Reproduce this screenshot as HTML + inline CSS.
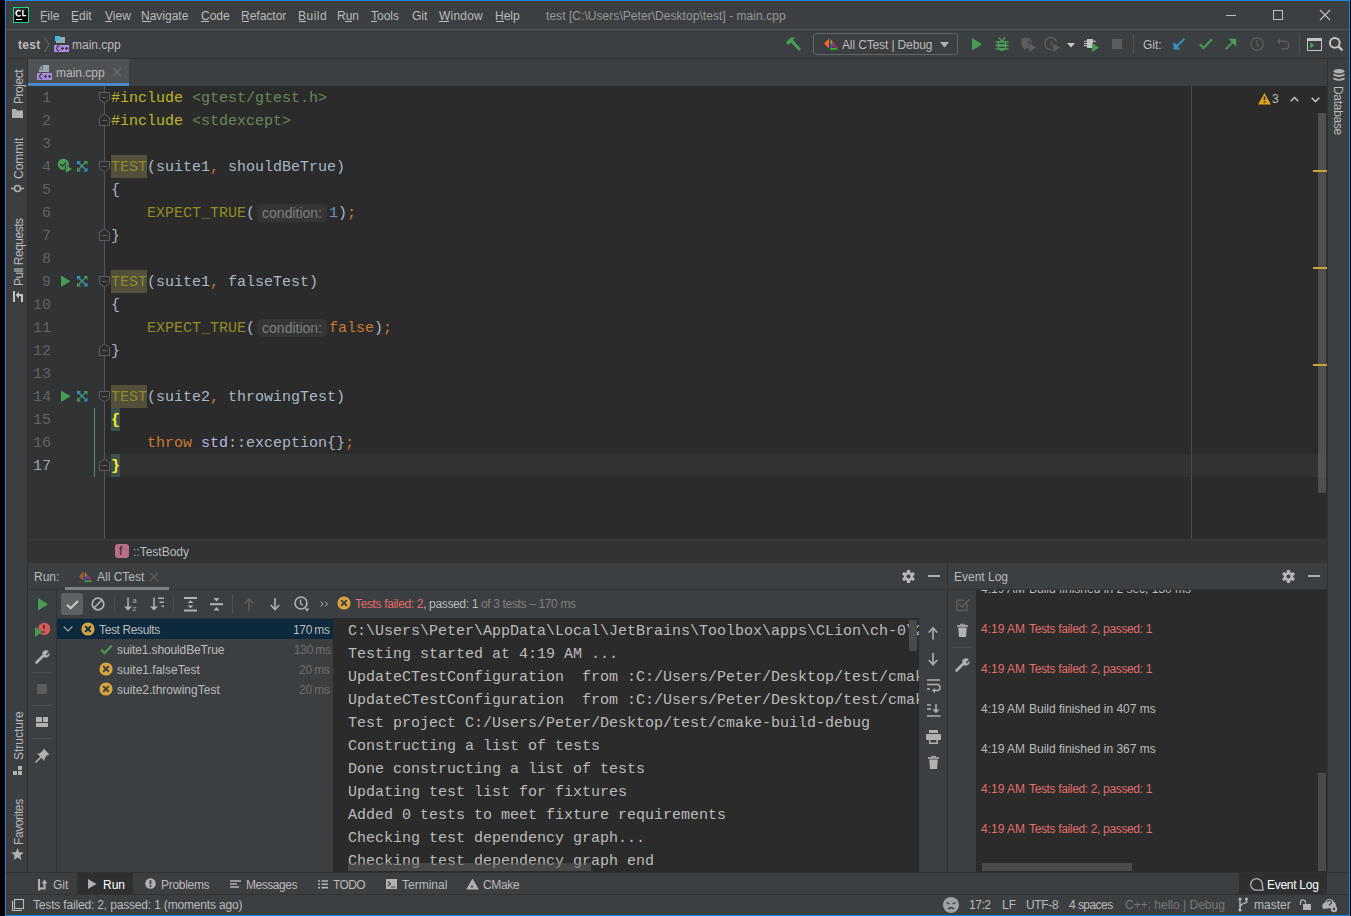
<!DOCTYPE html>
<html><head><meta charset="utf-8">
<style>
*{margin:0;padding:0;box-sizing:border-box}
html,body{width:1351px;height:916px;overflow:hidden;background:#000}
body{position:relative;font-family:"Liberation Sans",sans-serif;font-size:12px;color:#BBBBBB}
.a{position:absolute}
.t{position:absolute;white-space:pre;line-height:14px}
.m{font-family:"Liberation Mono",monospace;font-size:15px}
svg{position:absolute;overflow:visible}
.con{position:absolute;left:348px;white-space:pre;font-family:"Liberation Mono",monospace;font-size:15px;line-height:23px;color:#BBBBBB;padding-top:1px}
.ev{position:absolute;left:981px;white-space:pre;line-height:14px;color:#BBBBBB}
.ev span{position:absolute;left:48px}
.code{position:absolute;left:111px;padding-top:1px;white-space:pre;font-family:"Liberation Mono",monospace;font-size:15px;line-height:23px;height:23px}
.ln{position:absolute;left:28px;width:23px;padding-top:1px;text-align:right;white-space:pre;font-family:"Liberation Mono",monospace;font-size:15px;line-height:23px;color:#606366}
.hint{display:inline-block;font-family:"Liberation Sans",sans-serif;font-size:14px;color:#808080;background:#353535;border-radius:4px;line-height:18px;height:18px;width:70px;padding:0 0 0 5px;margin:2px 2px 0 2px;vertical-align:top}

</style></head><body>
<!-- window frame -->
<div class="a" style="left:5px;top:0;width:1345px;height:916px;background:#1a86e6"></div>
<div class="a" style="left:6px;top:1px;width:1343px;height:914px;background:#3f3b38"></div>
<div class="a" style="left:7px;top:2px;width:1341px;height:913px;background:#3C3F41"></div>

<!-- title separator -->
<div class="a" style="left:6px;top:29px;width:1343px;height:1px;background:#555555"></div>
<!-- nav bar bottom line -->
<div class="a" style="left:6px;top:58px;width:1343px;height:1px;background:#323232"></div>

<!-- left strip divider -->
<div class="a" style="left:27px;top:59px;width:1px;height:813px;background:#323232"></div>
<!-- right strip divider -->
<div class="a" style="left:1327px;top:59px;width:1px;height:813px;background:#323232"></div>

<!-- editor tab bar -->
<div class="a" style="left:28px;top:59px;width:101px;height:24px;background:#4E5254"></div>
<div class="a" style="left:28px;top:83px;width:101px;height:3px;background:#4A88C7"></div>

<!-- editor -->
<div class="a" style="left:28px;top:86px;width:1299px;height:453px;background:#2B2B2B"></div>
<div class="a" style="left:28px;top:86px;width:76px;height:453px;background:#313335"></div>
<div class="a" style="left:104px;top:86px;width:1px;height:453px;background:#555555"></div>
<div class="a" style="left:105px;top:454px;width:1222px;height:23px;background:#323232"></div>
<div class="a" style="left:1191px;top:86px;width:1px;height:453px;background:#4a4a4a"></div>

<!-- breadcrumb bar -->
<div class="a" style="left:28px;top:539px;width:1299px;height:1px;background:#393939"></div><div class="a" style="left:28px;top:540px;width:1299px;height:22px;background:#313335"></div>
<div class="a" style="left:28px;top:562px;width:1299px;height:1px;background:#323232"></div>

<!-- bottom panel -->
<div class="a" style="left:28px;top:589px;width:1299px;height:1px;background:#323232"></div>
<div class="a" style="left:947px;top:563px;width:1px;height:309px;background:#323232"></div>
<div class="a" style="left:56px;top:590px;width:1px;height:282px;background:#323232"></div>
<div class="a" style="left:333px;top:618px;width:586px;height:254px;background:#2B2B2B"></div>
<div class="a" style="left:57px;top:618px;width:276px;height:1px;background:#323232"></div><div class="a" style="left:57px;top:619px;width:276px;height:20px;background:#0D293E"></div>
<div class="a" style="left:976px;top:590px;width:351px;height:282px;background:#2B2B2B"></div>

<!-- bottom tool bar -->
<div class="a" style="left:6px;top:872px;width:1343px;height:1px;background:#323232"></div>
<div class="a" style="left:77px;top:873px;width:56px;height:21px;background:#2D2F31"></div><div class="a" style="left:1239px;top:873px;width:88px;height:21px;background:#2D2F31"></div>
<div class="a" style="left:6px;top:894px;width:1343px;height:1px;background:#323232"></div>


<!-- ===== TITLE BAR ===== -->
<div class="a" style="left:13px;top:7px;width:16px;height:16px;background:#21D789"></div>
<div class="a" style="left:14px;top:8px;width:14px;height:14px;background:linear-gradient(160deg,#444 0%,#000 55%)"></div>
<svg style="left:13px;top:7px" width="16" height="16"><path d="M7.6 4.2A2.6 2.8 0 1 0 7.6 8.2" stroke="#FFFFFF" stroke-width="1.4" fill="none"/><path d="M9.9 3V8.6H13.2" stroke="#FFFFFF" stroke-width="1.4" fill="none"/></svg>
<div class="a" style="left:16px;top:19px;width:6px;height:1px;background:#fff"></div>

<div class="t" style="left:40px;top:9px">File</div>
<div class="t" style="left:71px;top:9px">Edit</div>
<div class="t" style="left:105px;top:9px">View</div>
<div class="t" style="left:141px;top:9px">Navigate</div>
<div class="t" style="left:201px;top:9px">Code</div>
<div class="t" style="left:241px;top:9px">Refactor</div>
<div class="t" style="left:298px;top:9px;letter-spacing:0.5px">Build</div>
<div class="t" style="left:337px;top:9px">Run</div>
<div class="t" style="left:371px;top:9px">Tools</div>
<div class="t" style="left:412px;top:9px">Git</div>
<div class="t" style="left:439px;top:9px;letter-spacing:0.2px">Window</div>
<div class="t" style="left:495px;top:9px">Help</div>
<div class="t" style="left:546px;top:9px;color:#989898;letter-spacing:0.05px">test [C:\Users\Peter\Desktop\test] - main.cpp</div>
<!-- mnemonic underlines -->
<div class="a" style="left:41px;top:21px;width:6px;height:1px;background:#BBB"></div>
<div class="a" style="left:72px;top:21px;width:6px;height:1px;background:#BBB"></div>
<div class="a" style="left:105px;top:21px;width:7px;height:1px;background:#BBB"></div>
<div class="a" style="left:142px;top:21px;width:9px;height:1px;background:#BBB"></div>
<div class="a" style="left:201px;top:21px;width:8px;height:1px;background:#BBB"></div>
<div class="a" style="left:242px;top:21px;width:7px;height:1px;background:#BBB"></div>
<div class="a" style="left:299px;top:21px;width:7px;height:1px;background:#BBB"></div>
<div class="a" style="left:345px;top:21px;width:7px;height:1px;background:#BBB"></div>
<div class="a" style="left:371px;top:21px;width:6px;height:1px;background:#BBB"></div>
<div class="a" style="left:439px;top:21px;width:10px;height:1px;background:#BBB"></div>
<div class="a" style="left:496px;top:21px;width:8px;height:1px;background:#BBB"></div>

<!-- window controls -->
<div class="a" style="left:1226px;top:15px;width:10px;height:1px;background:#C0C0C0"></div>
<div class="a" style="left:1273px;top:10px;width:10px;height:10px;border:1px solid #C0C0C0"></div>
<svg style="left:1320px;top:10px" width="10" height="10"><path d="M0 0L10 10M10 0L0 10" stroke="#C0C0C0" stroke-width="1.1"/></svg>

<!-- ===== NAV BAR ===== -->
<div class="t" style="left:18px;top:38px;font-weight:bold;letter-spacing:0.3px">test</div>
<svg style="left:44px;top:37px" width="6" height="16"><path d="M0.5 0.5L5 7.5L0.5 15" stroke="#6E6E6E" fill="none" stroke-width="1"/></svg>
<div class="a" style="left:55px;top:36px;width:5px;height:5px;background:#40B6E0"></div>
<div class="a" style="left:60px;top:37px;width:5px;height:6px;background:#9AA7B0"></div>
<div class="a" style="left:56px;top:41px;width:9px;height:2px;background:#9AA7B0"></div>
<div class="a" style="left:54px;top:45px;width:15px;height:7px;background:#A98CDA"></div>
<svg style="left:54px;top:45px" width="15" height="7"><path d="M5.5 1.6A1.9 2.1 0 1 0 5.5 5.2" stroke="#3F3552" stroke-width="1.2" fill="none"/><path d="M6.9 3.4H10M8.45 1.9V4.9M11 3.4H14.1M12.55 1.9V4.9" stroke="#3F3552" stroke-width="1.2"/></svg>
<div class="t" style="left:72px;top:38px">main.cpp</div>


<!-- nav toolbar right -->
<svg style="left:785px;top:36px" width="17" height="16"><path d="M1 6L6 1.5L10 1.5L8 4L16 13L14 15L6 6.5L3 9Z" fill="#499C54"/></svg>
<div class="a" style="left:813px;top:33px;width:145px;height:22px;border:1px solid #636566;border-radius:3px"></div>
<svg style="left:824px;top:38px" width="15" height="13"><path d="M5 0.5L5 10.5L0 5.5Z" fill="#F26522"/><path d="M6.5 0.8L9.2 4.6L6.5 6.8Z" fill="#6CC644"/><path d="M6.5 6.8L9.2 4.6L10.6 6.6L7.8 10L6.5 10Z" fill="#3B4FD0"/><path d="M6.8 0.8L14.5 11.3L11.6 10.2L8.6 5.5Z" fill="#D7263D"/><path d="M6.5 10L11.6 10L14.5 11.5L6.5 12Z" fill="#27C227"/></svg>
<div class="t" style="left:842px;top:38px;letter-spacing:-0.13px">All CTest | Debug</div>
<svg style="left:940px;top:42px" width="9" height="6"><path d="M0 0L9 0L4.5 5.5Z" fill="#AFB1B3"/></svg>
<svg style="left:972px;top:38px" width="10" height="13"><path d="M0 0L10 6.2L0 12.4Z" fill="#499C54"/></svg>
<svg style="left:995px;top:37px" width="14" height="15"><path d="M4 0.5L6 3M10 0.5L8 3" stroke="#499C54" stroke-width="1.6"/><ellipse cx="7" cy="8.5" rx="4.6" ry="5.6" fill="#499C54"/><path d="M0.5 5H13.5M0.5 8.5H13.5M0.5 12H13.5" stroke="#499C54" stroke-width="1.4"/><path d="M4.2 6.4H9.8M4.2 10.4H9.8" stroke="#3C3F41" stroke-width="1.4"/></svg>
<svg style="left:1021px;top:37px" width="15" height="15"><path d="M0.5 1.5Q5 0 9.5 1.5L9.5 4L7.5 4L7.5 11Q5 12.5 3 12 Q0.5 10 0.5 6Z" fill="#5D5D5D"/><path d="M8.3 3.5L10 3.5L10 6" stroke="#5D5D5D" stroke-width="1.2" fill="none"/><path d="M8 6L15 10.5L8 15Z" fill="#5D5D5D"/></svg>
<svg style="left:1045px;top:37px" width="16" height="16"><path d="M11.5 4.5A6 6 0 1 0 6.5 12.5" stroke="#5D5D5D" stroke-width="1.6" fill="none"/><path d="M6.5 3.5L6.5 7L5.5 9" stroke="#5D5D5D" stroke-width="1.2" fill="none"/><path d="M8 6.5L15 10.5L8 15Z" fill="#5D5D5D"/></svg>
<svg style="left:1067px;top:43px" width="8" height="5"><path d="M0 0L8 0L4 4.5Z" fill="#C8C8C8"/></svg>
<svg style="left:1083px;top:38px" width="17" height="15"><rect x="4" y="1" width="6" height="9" fill="#C4C4C4"/><path d="M1 3.3H4M1 5.5H4M1 7.6H4M10 3.3H13" stroke="#C4C4C4" stroke-width="1.1"/><path d="M9 5L16 9.5L9 14Z" fill="#499C54"/></svg>
<div class="a" style="left:1112px;top:39px;width:10px;height:10px;background:#5C5C5C"></div>
<div class="a" style="left:1133px;top:34px;width:1px;height:20px;background:#515151"></div>
<div class="t" style="left:1143px;top:38px">Git:</div>
<svg style="left:1173px;top:38px" width="13" height="12"><path d="M11.5 0.8L2.5 9.3" stroke="#3592C4" stroke-width="1.9"/><path d="M0.5 3.8L0.5 11.5L7.5 11.5Z" fill="#3592C4"/></svg>
<svg style="left:1199px;top:38px" width="14" height="12"><path d="M0.8 6.3L4.5 10L13 1.3" stroke="#499C54" stroke-width="2" fill="none"/></svg>
<svg style="left:1225px;top:38px" width="12" height="12"><path d="M0.8 11.2L9.5 2.5" stroke="#499C54" stroke-width="1.9"/><path d="M3.5 0.8L11.2 0.8L11.2 8.5Z" fill="#499C54"/></svg>
<svg style="left:1250px;top:37px" width="14" height="14"><circle cx="7" cy="7" r="6.2" stroke="#5A5A5A" stroke-width="1.4" fill="none"/><path d="M6.5 3.2V7.3L8.8 9.5" stroke="#5A5A5A" stroke-width="1.2" fill="none"/></svg>
<svg style="left:1277px;top:37px" width="13" height="14"><path d="M2 4.2H8Q12 4.2 12 8Q12 12 8 12H4" stroke="#5A5A5A" stroke-width="1.5" fill="none"/><path d="M3 0.5L3 8L0 4.2Z" fill="#5A5A5A"/></svg>
<div class="a" style="left:1299px;top:34px;width:1px;height:20px;background:#515151"></div>
<svg style="left:1307px;top:38px" width="15" height="13"><rect x="0.5" y="0.5" width="14" height="12" stroke="#C4C4C4" fill="none"/><rect x="0" y="0" width="15" height="3" fill="#C4C4C4"/><path d="M3.2 4.2L7.3 7.3L3.2 10.4Z" fill="#499C54"/></svg>
<svg style="left:1328px;top:36px" width="17" height="17"><circle cx="6.8" cy="6.8" r="4.9" stroke="#C5C5C5" stroke-width="2" fill="none"/><path d="M10.3 10.3L14.5 14.5" stroke="#C5C5C5" stroke-width="2.4"/></svg>


<!-- ===== LEFT STRIP ===== -->
<div class="t" style="left:12px;top:104px;transform:rotate(-90deg);transform-origin:0 0;letter-spacing:-0.45px">Project</div>
<svg style="left:12px;top:109px" width="11" height="9"><path d="M0 0H4L5 1.5H11V9H0Z" fill="#AFB1B3"/></svg>
<div class="t" style="left:12px;top:179px;transform:rotate(-90deg);transform-origin:0 0">Commit</div>
<svg style="left:11px;top:184px" width="13" height="9"><circle cx="6.5" cy="4.5" r="3" stroke="#AFB1B3" stroke-width="1.6" fill="none"/><path d="M0 4.5H3.5M9.5 4.5H13" stroke="#AFB1B3" stroke-width="1.4"/></svg>
<div class="t" style="left:12px;top:286px;transform:rotate(-90deg);transform-origin:0 0;letter-spacing:-0.5px">Pull Requests</div>
<svg style="left:13px;top:291px" width="10" height="11"><path d="M1 0V11" stroke="#C4C4C4" stroke-width="2"/><path d="M5 4H9V11" stroke="#C4C4C4" stroke-width="2" fill="none"/><path d="M2.6 4L6 0.6V7.4Z" fill="#C4C4C4"/></svg>
<div class="t" style="left:12px;top:760px;transform:rotate(-90deg);transform-origin:0 0">Structure</div>
<svg style="left:13px;top:766px" width="10" height="10"><rect x="5" y="0" width="4" height="4" fill="#AFB1B3"/><rect x="0" y="5" width="4" height="4" fill="#AFB1B3"/><rect x="5" y="5" width="4" height="4" fill="#AFB1B3"/></svg>
<div class="t" style="left:12px;top:845px;transform:rotate(-90deg);transform-origin:0 0;letter-spacing:-0.4px">Favorites</div>
<svg style="left:11px;top:848px" width="13" height="12"><path d="M6.5 0L8.2 4.3L12.8 4.6L9.3 7.5L10.4 12L6.5 9.6L2.6 12L3.7 7.5L0.2 4.6L4.8 4.3Z" fill="#AFB1B3"/></svg>

<!-- ===== RIGHT STRIP ===== -->
<svg style="left:1333px;top:69px" width="12" height="13"><ellipse cx="6" cy="2.2" rx="5.6" ry="2.2" fill="#AFB1B3"/><path d="M0.4 4.6Q6 7.4 11.6 4.6V6.6Q6 9.4 0.4 6.6Z M0.4 8.6Q6 11.4 11.6 8.6V10.4Q6 13.2 0.4 10.4Z" fill="#AFB1B3"/></svg>
<div class="t" style="left:1345px;top:86px;transform:rotate(90deg);transform-origin:0 0;letter-spacing:-0.3px">Database</div>

<!-- ===== EDITOR TAB ===== -->
<svg style="left:37px;top:64px" width="16" height="17"><path d="M2 5L5 1.3V5Z" fill="#9AA7B0"/><path d="M5.8 1H12V8H2V5.8H5.8Z" fill="#9AA7B0"/><rect x="0" y="9" width="15" height="7" fill="#A98CDA"/></svg>
<svg style="left:37px;top:73px" width="15" height="7"><path d="M5.5 1.6A1.9 2.1 0 1 0 5.5 5.2" stroke="#3F3552" stroke-width="1.2" fill="none"/><path d="M6.9 3.4H10M8.45 1.9V4.9M11 3.4H14.1M12.55 1.9V4.9" stroke="#3F3552" stroke-width="1.2"/></svg>
<div class="t" style="left:56px;top:66px">main.cpp</div>
<svg style="left:113px;top:68px" width="8" height="8"><path d="M0 0L8 8M8 0L0 8" stroke="#6E6E6E" stroke-width="1.1"/></svg>


<!-- ===== EDITOR CODE ===== -->
<div class="a" style="left:111px;top:155px;width:36px;height:23px;background:#52503A"></div>
<div class="a" style="left:111px;top:270px;width:36px;height:23px;background:#52503A"></div>
<div class="a" style="left:111px;top:385px;width:36px;height:23px;background:#52503A"></div>
<div class="a" style="left:111px;top:408px;width:9px;height:23px;background:#3B514D"></div>
<div class="a" style="left:111px;top:454px;width:9px;height:23px;background:#3B514D"></div>
<div class="a" style="left:94px;top:408px;width:1px;height:69px;background:#5A8A84"></div>
<div class="ln" style="top:86px;color:#606366">1</div>
<div class="ln" style="top:109px;color:#606366">2</div>
<div class="ln" style="top:132px;color:#606366">3</div>
<div class="ln" style="top:155px;color:#606366">4</div>
<div class="ln" style="top:178px;color:#606366">5</div>
<div class="ln" style="top:201px;color:#606366">6</div>
<div class="ln" style="top:224px;color:#606366">7</div>
<div class="ln" style="top:247px;color:#606366">8</div>
<div class="ln" style="top:270px;color:#606366">9</div>
<div class="ln" style="top:293px;color:#606366">10</div>
<div class="ln" style="top:316px;color:#606366">11</div>
<div class="ln" style="top:339px;color:#606366">12</div>
<div class="ln" style="top:362px;color:#606366">13</div>
<div class="ln" style="top:385px;color:#606366">14</div>
<div class="ln" style="top:408px;color:#606366">15</div>
<div class="ln" style="top:431px;color:#606366">16</div>
<div class="ln" style="top:454px;color:#A4A3A3">17</div>
<div class="code" style="top:86px"><span style="color:#BBB529;">#include</span> <span style="color:#6A8759;">&lt;gtest/gtest.h&gt;</span></div>
<div class="code" style="top:109px"><span style="color:#BBB529;">#include</span> <span style="color:#6A8759;">&lt;stdexcept&gt;</span></div>
<div class="code" style="top:155px"><span style="color:#908B25;">TEST</span><span style="color:#A9B7C6;">(suite1</span><span style="color:#CC7832;">,</span><span style="color:#A9B7C6;"> shouldBeTrue)</span></div>
<div class="code" style="top:178px"><span style="color:#A9B7C6;">{</span></div>
<div class="code" style="top:201px">    <span style="color:#908B25;">EXPECT_TRUE</span><span style="color:#A9B7C6;">(</span><span class="hint">condition:</span><span style="color:#6897BB;">1</span><span style="color:#A9B7C6;">)</span><span style="color:#CC7832;">;</span></div>
<div class="code" style="top:224px"><span style="color:#A9B7C6;">}</span></div>
<div class="code" style="top:270px"><span style="color:#908B25;">TEST</span><span style="color:#A9B7C6;">(suite1</span><span style="color:#CC7832;">,</span><span style="color:#A9B7C6;"> falseTest)</span></div>
<div class="code" style="top:293px"><span style="color:#A9B7C6;">{</span></div>
<div class="code" style="top:316px">    <span style="color:#908B25;">EXPECT_TRUE</span><span style="color:#A9B7C6;">(</span><span class="hint">condition:</span><span style="color:#CC7832;">false</span><span style="color:#A9B7C6;">)</span><span style="color:#CC7832;">;</span></div>
<div class="code" style="top:339px"><span style="color:#A9B7C6;">}</span></div>
<div class="code" style="top:385px"><span style="color:#908B25;">TEST</span><span style="color:#A9B7C6;">(suite2</span><span style="color:#CC7832;">,</span><span style="color:#A9B7C6;"> throwingTest)</span></div>
<div class="code" style="top:408px"><span style="color:#FFEF28;font-weight:bold">{</span></div>
<div class="code" style="top:431px">    <span style="color:#CC7832;">throw</span> <span style="color:#B5B6E3;">std</span><span style="color:#A9B7C6;">::exception{}</span><span style="color:#CC7832;">;</span></div>
<div class="code" style="top:454px"><span style="color:#FFEF28;font-weight:bold">}</span></div>


<!-- fold markers & gutter icons -->
<svg style="left:0;top:0" width="1" height="1"><path d="M99.5 92.5H109.5V99.5L104.5 103L99.5 99.5Z" fill="#2D2D2D" stroke="#5E5E5E"/><path d="M102 97.5H107" stroke="#5E5E5E"/><path d="M99.5 161.5H109.5V168.5L104.5 172L99.5 168.5Z" fill="#2D2D2D" stroke="#5E5E5E"/><path d="M102 166.5H107" stroke="#5E5E5E"/><path d="M99.5 276.5H109.5V283.5L104.5 287L99.5 283.5Z" fill="#2D2D2D" stroke="#5E5E5E"/><path d="M102 281.5H107" stroke="#5E5E5E"/><path d="M99.5 391.5H109.5V398.5L104.5 402L99.5 398.5Z" fill="#2D2D2D" stroke="#5E5E5E"/><path d="M102 396.5H107" stroke="#5E5E5E"/><path d="M104.5 114L109.5 117.5V125.5H99.5V117.5Z" fill="#2D2D2D" stroke="#5E5E5E"/><path d="M102 120.5H107" stroke="#5E5E5E"/><path d="M104.5 229L109.5 232.5V240.5H99.5V232.5Z" fill="#2D2D2D" stroke="#5E5E5E"/><path d="M102 235.5H107" stroke="#5E5E5E"/><path d="M104.5 344L109.5 347.5V355.5H99.5V347.5Z" fill="#2D2D2D" stroke="#5E5E5E"/><path d="M102 350.5H107" stroke="#5E5E5E"/><path d="M104.5 459L109.5 462.5V470.5H99.5V462.5Z" fill="#2D2D2D" stroke="#5E5E5E"/><path d="M102 465.5H107" stroke="#5E5E5E"/><circle cx="63.3" cy="164.3" r="5.6" fill="#499C54"/><path d="M60.2 164L62.4 166.3L65.8 162.3" stroke="#313335" stroke-width="1.3" fill="none"/><path d="M64.8 164.5L73.5 168.5L64.8 173.5Z" fill="#313335"/><path d="M65.8 165.1L72 169L65.8 173Z" fill="#499C54"/><path d="M61 275.5L70.5 281.2L61 287Z" fill="#499C54"/><path d="M61 390.5L70.5 396.2L61 402Z" fill="#499C54"/><path d="M78.5 162.5L85.5 169.5" stroke="#3592C4" stroke-width="1.5"/><path d="M77 161H81L77 165Z M87.5 171.5H83.5L87.5 167.5Z" fill="#3592C4"/><path d="M78.5 169.5L85.5 162.5" stroke="#499C54" stroke-width="1.3"/><path d="M87.5 161H83.5L87.5 165Z M77 171.5H81L77 167.5Z" fill="#499C54"/><path d="M78.5 277.5L85.5 284.5" stroke="#3592C4" stroke-width="1.5"/><path d="M77 276H81L77 280Z M87.5 286.5H83.5L87.5 282.5Z" fill="#3592C4"/><path d="M78.5 284.5L85.5 277.5" stroke="#499C54" stroke-width="1.3"/><path d="M87.5 276H83.5L87.5 280Z M77 286.5H81L77 282.5Z" fill="#499C54"/><path d="M78.5 392.5L85.5 399.5" stroke="#3592C4" stroke-width="1.5"/><path d="M77 391H81L77 395Z M87.5 401.5H83.5L87.5 397.5Z" fill="#3592C4"/><path d="M78.5 399.5L85.5 392.5" stroke="#499C54" stroke-width="1.3"/><path d="M87.5 391H83.5L87.5 395Z M77 401.5H81L77 397.5Z" fill="#499C54"/></svg>


<!-- editor right side -->
<svg style="left:1258px;top:93px" width="13" height="12"><path d="M6.5 0L13 11.5H0Z" fill="#DBA21B"/><path d="M6.5 3.5V7" stroke="#2B2B2B" stroke-width="1.6"/><rect x="5.7" y="8.3" width="1.6" height="1.6" fill="#2B2B2B"/></svg>
<div class="t" style="left:1272px;top:92px;font-size:12px">3</div>
<svg style="left:1290px;top:96px" width="9" height="6"><path d="M0.7 5.3L4.5 1.5L8.3 5.3" stroke="#C9C9C9" stroke-width="1.4" fill="none"/></svg>
<svg style="left:1311px;top:97px" width="9" height="6"><path d="M0.7 0.7L4.5 4.5L8.3 0.7" stroke="#C9C9C9" stroke-width="1.4" fill="none"/></svg>
<div class="a" style="left:1318px;top:113px;width:8px;height:380px;background:rgba(110,110,110,0.55)"></div>
<div class="a" style="left:1313px;top:170px;width:14px;height:2px;background:#C8A23A"></div>
<div class="a" style="left:1313px;top:267px;width:14px;height:2px;background:#C8A23A"></div>
<div class="a" style="left:1313px;top:364px;width:14px;height:2px;background:#C8A23A"></div>

<!-- breadcrumbs -->
<div class="a" style="left:115px;top:544px;width:14px;height:14px;background:#B86E84;border-radius:3px"></div>
<div class="t" style="left:119px;top:544px;font-size:12px;color:#2B2B2B">f</div>
<div class="t" style="left:133px;top:545px">::TestBody</div>


<!-- ===== RUN PANEL HEADER ===== -->
<div class="t" style="left:34px;top:570px">Run:</div>
<svg style="left:79px;top:571px" width="14" height="12"><path d="M4.5 0.5L4.5 10L0 5.2Z" fill="#B5562C"/><path d="M5.8 0.5L8.4 4.2L5.8 6.3Z" fill="#5FAF44"/><path d="M5.8 6.3L8.4 4.2L9.7 6.1L7.1 9.5L5.8 9.5Z" fill="#3A4EC8"/><path d="M6.1 0.5L13.5 10.6L10.7 9.6L7.9 5.2Z" fill="#B8353F"/><path d="M5.8 9.5L10.7 9.6L13.5 10.8L5.8 11.3Z" fill="#2EA84A"/></svg>
<div class="t" style="left:97px;top:570px">All CTest</div>
<svg style="left:150px;top:573px" width="8" height="8"><path d="M0 0L8 8M8 0L0 8" stroke="#5E6060" stroke-width="1.1"/></svg>
<div class="a" style="left:65px;top:587px;width:104px;height:3px;background:#7E8287"></div>
<svg style="left:902px;top:570px" width="13" height="13"><g transform="translate(6.5 6.5)" fill="#B4B6B8"><circle r="4.6"/><rect x="-1.7" y="-6.6" width="3.4" height="3.5" rx="0.8" transform="rotate(0)"/><rect x="-1.7" y="-6.6" width="3.4" height="3.5" rx="0.8" transform="rotate(60)"/><rect x="-1.7" y="-6.6" width="3.4" height="3.5" rx="0.8" transform="rotate(120)"/><rect x="-1.7" y="-6.6" width="3.4" height="3.5" rx="0.8" transform="rotate(180)"/><rect x="-1.7" y="-6.6" width="3.4" height="3.5" rx="0.8" transform="rotate(240)"/><rect x="-1.7" y="-6.6" width="3.4" height="3.5" rx="0.8" transform="rotate(300)"/><circle r="1.9" fill="#3C3F41"/></g></svg>
<div class="a" style="left:928px;top:575px;width:12px;height:2px;background:#AFB1B3"></div>

<!-- ===== RUN LEFT TOOLBAR ===== -->
<svg style="left:38px;top:598px" width="10" height="13"><path d="M0 0L10 6.2L0 12.4Z" fill="#499C54"/></svg>
<svg style="left:30px;top:618px" width="26" height="22"><circle cx="14.2" cy="10.9" r="6.1" fill="#D95B55"/><rect x="13" y="7" width="1.8" height="3.7" fill="#2F3A3C"/><rect x="12.2" y="13.4" width="2.6" height="1.4" fill="#2F3A3C"/><path d="M5 9L12 14L5 19Z" fill="#499C54" stroke="#3C3F41" stroke-width="0.9" stroke-linejoin="round"/><path d="M5 9L12 14L5 19Z" fill="#499C54"/></svg>
<svg style="left:35px;top:649px" width="15" height="15"><path d="M1.5 13.5L8 7" stroke="#AFB1B3" stroke-width="2.6" stroke-linecap="round"/><path d="M7 4.5A4 4 0 0 1 13.8 2.5L11 5.3L12 6.5L14.5 3.8A4 4 0 0 1 9.5 8.5Z" fill="#AFB1B3"/></svg>
<div class="a" style="left:32px;top:672px;width:20px;height:1px;background:#4B4D4F"></div>
<div class="a" style="left:37px;top:684px;width:10px;height:10px;background:#5C5C5C"></div>
<div class="a" style="left:32px;top:705px;width:20px;height:1px;background:#4B4D4F"></div>
<svg style="left:36px;top:717px" width="12" height="10"><rect x="0" y="0" width="6" height="5" fill="#AFB1B3"/><rect x="7" y="0" width="5" height="5" fill="#AFB1B3"/><rect x="0" y="6" width="12" height="4" fill="#AFB1B3"/></svg>
<div class="a" style="left:32px;top:738px;width:20px;height:1px;background:#4B4D4F"></div>
<svg style="left:35px;top:748px" width="15" height="15"><path d="M0.5 14.5L6 9" stroke="#AFB1B3" stroke-width="1.6"/><path d="M8.5 0.5L14.5 6.5L12.5 7L9.5 10.5L9.5 13L2 5.5L4.5 5.5L8 2.5Z" fill="#AFB1B3"/></svg>

<!-- ===== RUN TOP TOOLBAR ===== -->
<div class="a" style="left:61px;top:593px;width:22px;height:22px;background:#5C6164;border-radius:3px"></div>
<svg style="left:66px;top:600px" width="13" height="10"><path d="M1 4.8L4.5 8.3L12 1" stroke="#C9C9C9" stroke-width="2" fill="none"/></svg>
<svg style="left:91px;top:597px" width="14" height="14"><circle cx="7" cy="7" r="5.8" stroke="#AFB1B3" stroke-width="1.7" fill="none"/><path d="M3 11L11 3" stroke="#AFB1B3" stroke-width="1.7"/></svg>
<div class="a" style="left:114px;top:594px;width:1px;height:20px;background:#4B4D4F"></div>
<svg style="left:124px;top:597px" width="14" height="15"><path d="M4 0.5V12.5" stroke="#AFB1B3" stroke-width="1.5"/><path d="M0 9.5L4 13.5L8 9.5Z" fill="#AFB1B3"/><text x="8.5" y="6" font-family="Liberation Sans" font-size="7.5" fill="#AFB1B3">a</text><text x="8.5" y="13.5" font-family="Liberation Sans" font-size="7.5" fill="#AFB1B3">z</text></svg>
<svg style="left:150px;top:597px" width="15" height="15"><path d="M4 0.5V12.5" stroke="#AFB1B3" stroke-width="1.5"/><path d="M0 9.5L4 13.5L8 9.5Z" fill="#AFB1B3"/><path d="M8 1.3H14M9.5 5.3H14M11.5 9.3H14" stroke="#AFB1B3" stroke-width="1.6"/></svg>
<div class="a" style="left:173px;top:594px;width:1px;height:20px;background:#4B4D4F"></div>
<svg style="left:184px;top:597px" width="13" height="15"><path d="M0 1H13M0 13.5H13" stroke="#AFB1B3" stroke-width="2"/><path d="M3.5 6L6.5 3.2L9.5 6Z M3.5 8.5L6.5 11.3L9.5 8.5Z" fill="#AFB1B3"/></svg>
<svg style="left:210px;top:597px" width="13" height="15"><path d="M0 7.2H13" stroke="#AFB1B3" stroke-width="2"/><path d="M3.5 1L6.5 4.5L9.5 1Z M3.5 13.5L6.5 10L9.5 13.5Z" fill="#AFB1B3"/></svg>
<div class="a" style="left:232px;top:594px;width:1px;height:20px;background:#4B4D4F"></div>
<svg style="left:244px;top:598px" width="10" height="13"><path d="M5 2V12.5" stroke="#5D5D5D" stroke-width="1.6"/><path d="M0.8 5.5L5 1L9.2 5.5" stroke="#5D5D5D" stroke-width="1.6" fill="none"/></svg>
<svg style="left:270px;top:598px" width="10" height="13"><path d="M5 0V10.5" stroke="#AFB1B3" stroke-width="1.6"/><path d="M0.8 7L5 11.5L9.2 7" stroke="#AFB1B3" stroke-width="1.6" fill="none"/></svg>
<svg style="left:294px;top:596px" width="16" height="17"><circle cx="7" cy="7" r="6" stroke="#AFB1B3" stroke-width="1.6" fill="none"/><path d="M6.5 3.5V7.3L8.8 9.3" stroke="#AFB1B3" stroke-width="1.3" fill="none"/><path d="M10.5 12.5H15.5L13 15.5Z" fill="#AFB1B3"/></svg>
<svg style="left:320px;top:601px" width="9" height="6"><path d="M0.5 0.5L3 3L0.5 5.5M5 0.5L7.5 3L5 5.5" stroke="#AFB1B3" stroke-width="1" fill="none"/></svg>
<svg style="left:337px;top:596px" width="14" height="14"><circle cx="7" cy="7" r="6.6" fill="#D8A441"/><path d="M4.2 4.2L9.8 9.8M9.8 4.2L4.2 9.8" stroke="#3C3F41" stroke-width="1.9"/></svg>
<div class="t" style="left:355px;top:597px;letter-spacing:-0.35px"><span style="color:#E06C6C">Tests failed: 2</span>, passed: 1<span style="color:#808080"> of 3 tests – 170 ms</span></div>

<!-- ===== TEST TREE ===== -->
<svg style="left:63px;top:626px" width="10" height="6"><path d="M0.7 0.7L5 5L9.3 0.7" stroke="#AFB1B3" stroke-width="1.2" fill="none"/></svg>
<svg style="left:81px;top:622px" width="14" height="14"><circle cx="7" cy="7" r="6.6" fill="#D8A441"/><path d="M4.2 4.2L9.8 9.8M9.8 4.2L4.2 9.8" stroke="#0D293E" stroke-width="1.9"/></svg>
<div class="t" style="left:99px;top:623px;letter-spacing:-0.37px">Test Results</div>
<div class="t" style="left:293px;top:623px;letter-spacing:-0.3px;word-spacing:-0.8px">170 ms</div>
<svg style="left:100px;top:644px" width="13" height="11"><path d="M1 5.5L4.5 9L12 1.5" stroke="#499C54" stroke-width="2.2" fill="none"/></svg>
<div class="t" style="left:117px;top:643px;letter-spacing:-0.12px">suite1.shouldBeTrue</div>
<div class="t" style="left:294px;top:643px;color:#6E6E6E;letter-spacing:-0.3px;word-spacing:-0.8px">130 ms</div>
<svg style="left:99px;top:662px" width="14" height="14"><circle cx="7" cy="7" r="6.6" fill="#D8A441"/><path d="M4.2 4.2L9.8 9.8M9.8 4.2L4.2 9.8" stroke="#3C3F41" stroke-width="1.9"/></svg>
<div class="t" style="left:117px;top:663px">suite1.falseTest</div>
<div class="t" style="left:299px;top:663px;color:#6E6E6E;letter-spacing:-0.2px;word-spacing:-0.8px">20 ms</div>
<svg style="left:99px;top:682px" width="14" height="14"><circle cx="7" cy="7" r="6.6" fill="#D8A441"/><path d="M4.2 4.2L9.8 9.8M9.8 4.2L4.2 9.8" stroke="#3C3F41" stroke-width="1.9"/></svg>
<div class="t" style="left:117px;top:683px">suite2.throwingTest</div>
<div class="t" style="left:299px;top:683px;color:#6E6E6E;letter-spacing:-0.2px;word-spacing:-0.8px">20 ms</div>


<!-- ===== CONSOLE ===== -->
<div class="a" style="left:333px;top:618px;width:586px;height:254px;overflow:hidden">
<div class="con" style="left:15px;top:1px">C:\Users\Peter\AppData\Local\JetBrains\Toolbox\apps\CLion\ch-0\2</div>
<div class="con" style="left:15px;top:24px">Testing started at 4:19 AM ...</div>
<div class="con" style="left:15px;top:47px">UpdateCTestConfiguration  from :C:/Users/Peter/Desktop/test/cmake</div>
<div class="con" style="left:15px;top:70px">UpdateCTestConfiguration  from :C:/Users/Peter/Desktop/test/cmake</div>
<div class="con" style="left:15px;top:93px">Test project C:/Users/Peter/Desktop/test/cmake-build-debug</div>
<div class="con" style="left:15px;top:116px">Constructing a list of tests</div>
<div class="con" style="left:15px;top:139px">Done constructing a list of tests</div>
<div class="con" style="left:15px;top:162px">Updating test list for fixtures</div>
<div class="con" style="left:15px;top:185px">Added 0 tests to meet fixture requirements</div>
<div class="con" style="left:15px;top:208px">Checking test dependency graph...</div>
<div class="con" style="left:15px;top:231px">Checking test dependency graph end</div>
<div class="a" style="left:576px;top:2px;width:8px;height:31px;background:#4A4A4A"></div>
<div class="a" style="left:15px;top:245px;width:243px;height:8px;background:rgba(95,95,95,0.55)"></div>
</div>

<!-- console right toolbar -->
<svg style="left:928px;top:627px" width="10" height="13"><path d="M5 2V12.5" stroke="#AFB1B3" stroke-width="1.6"/><path d="M0.8 5.5L5 1L9.2 5.5" stroke="#AFB1B3" stroke-width="1.6" fill="none"/></svg>
<svg style="left:928px;top:653px" width="10" height="13"><path d="M5 0V10.5" stroke="#AFB1B3" stroke-width="1.6"/><path d="M0.8 7L5 11.5L9.2 7" stroke="#AFB1B3" stroke-width="1.6" fill="none"/></svg>
<svg style="left:927px;top:679px" width="14" height="14"><path d="M0 1H13M0 5.5H10Q13 5.5 13 8.5Q13 11.5 10 11.5H7M0 10H3" stroke="#AFB1B3" stroke-width="1.5" fill="none"/><path d="M8 9L5 11.5L8 14Z" fill="#AFB1B3"/></svg>
<svg style="left:927px;top:704px" width="14" height="13"><path d="M0 1H4M0 5H4M0 12H13.5" stroke="#AFB1B3" stroke-width="1.5"/><path d="M9 0V7" stroke="#AFB1B3" stroke-width="1.5"/><path d="M5.5 5.5L9 9.3L12.5 5.5Z" fill="#AFB1B3"/></svg>
<svg style="left:926px;top:730px" width="15" height="14"><rect x="3" y="0" width="9" height="3" fill="#AFB1B3"/><rect x="0" y="4" width="15" height="6" rx="1" fill="#AFB1B3"/><rect x="3" y="8" width="9" height="6" fill="#AFB1B3"/><rect x="4.5" y="10" width="6" height="2.5" fill="#3C3F41"/></svg>
<svg style="left:928px;top:756px" width="11" height="13"><path d="M0 2H11" stroke="#AFB1B3" stroke-width="1.6"/><path d="M3.5 1.3V0.3H7.5V1.3" stroke="#AFB1B3" stroke-width="1" fill="none"/><path d="M1.2 3.5H9.8L9 13H2Z" fill="#AFB1B3"/></svg>

<!-- ===== EVENT LOG ===== -->
<div class="t" style="left:954px;top:570px">Event Log</div>
<svg style="left:1282px;top:570px" width="13" height="13"><g transform="translate(6.5 6.5)" fill="#B4B6B8"><circle r="4.6"/><rect x="-1.7" y="-6.6" width="3.4" height="3.5" rx="0.8" transform="rotate(0)"/><rect x="-1.7" y="-6.6" width="3.4" height="3.5" rx="0.8" transform="rotate(60)"/><rect x="-1.7" y="-6.6" width="3.4" height="3.5" rx="0.8" transform="rotate(120)"/><rect x="-1.7" y="-6.6" width="3.4" height="3.5" rx="0.8" transform="rotate(180)"/><rect x="-1.7" y="-6.6" width="3.4" height="3.5" rx="0.8" transform="rotate(240)"/><rect x="-1.7" y="-6.6" width="3.4" height="3.5" rx="0.8" transform="rotate(300)"/><circle r="1.9" fill="#3C3F41"/></g></svg>
<div class="a" style="left:1308px;top:575px;width:12px;height:2px;background:#AFB1B3"></div>
<svg style="left:956px;top:597px" width="14" height="15"><path d="M11 6.5V13.5H0.8V3.2H8" stroke="#5D5D5D" stroke-width="1.5" fill="none"/><path d="M3 7L6 10L13.5 2" stroke="#5D5D5D" stroke-width="1.6" fill="none"/></svg>
<svg style="left:957px;top:624px" width="11" height="13"><path d="M0 2H11" stroke="#AFB1B3" stroke-width="1.6"/><path d="M3.5 1.3V0.3H7.5V1.3" stroke="#AFB1B3" stroke-width="1" fill="none"/><path d="M1.2 3.5H9.8L9 13H2Z" fill="#AFB1B3"/></svg>
<div class="a" style="left:952px;top:647px;width:20px;height:1px;background:#4B4D4F"></div>
<svg style="left:955px;top:657px" width="15" height="15"><path d="M1.5 13.5L8 7" stroke="#AFB1B3" stroke-width="2.6" stroke-linecap="round"/><path d="M7 4.5A4 4 0 0 1 13.8 2.5L11 5.3L12 6.5L14.5 3.8A4 4 0 0 1 9.5 8.5Z" fill="#AFB1B3"/></svg>
<div class="a" style="left:977px;top:590px;width:350px;height:282px;overflow:hidden">
<div class="ev" style="left:4px;top:-8px">4:19 AM<span>Build finished in 2 sec, 130 ms</span></div>
<div class="ev" style="left:4px;top:32px;color:#E06C6C">4:19 AM<span style="letter-spacing:-0.35px">Tests failed: 2, passed: 1</span></div>
<div class="ev" style="left:4px;top:72px;color:#E06C6C">4:19 AM<span style="letter-spacing:-0.35px">Tests failed: 2, passed: 1</span></div>
<div class="ev" style="left:4px;top:112px">4:19 AM<span>Build finished in 407 ms</span></div>
<div class="ev" style="left:4px;top:152px">4:19 AM<span>Build finished in 367 ms</span></div>
<div class="ev" style="left:4px;top:192px;color:#E06C6C">4:19 AM<span style="letter-spacing:-0.35px">Tests failed: 2, passed: 1</span></div>
<div class="ev" style="left:4px;top:232px;color:#E06C6C">4:19 AM<span style="letter-spacing:-0.35px">Tests failed: 2, passed: 1</span></div>
<div class="a" style="left:5px;top:273px;width:150px;height:8px;background:#4A4A4A"></div>
<div class="a" style="left:341px;top:183px;width:8px;height:98px;background:#4A4A4A"></div>
</div>


<!-- ===== BOTTOM TOOL BAR ===== -->
<svg style="left:37px;top:879px" width="12" height="12"><path d="M2 0V11.5M2 9.5H7.5V4" stroke="#AFB1B3" stroke-width="2" fill="none"/><path d="M4.5 4.5L7.5 0.5L10.5 4.5Z" fill="#AFB1B3"/></svg>
<div class="t" style="left:53px;top:878px">Git</div>
<svg style="left:88px;top:879px" width="9" height="11"><path d="M0 0L8.5 5L0 10Z" fill="#AFB1B3"/></svg>
<div class="t" style="left:103px;top:878px;color:#FFFFFF">Run</div>
<svg style="left:145px;top:878px" width="11" height="11"><circle cx="5.5" cy="5.5" r="5.3" fill="#AFB1B3"/><path d="M5.5 2.2V6.3" stroke="#3C3F41" stroke-width="1.8"/><rect x="4.6" y="7.3" width="1.8" height="1.7" fill="#3C3F41"/></svg>
<div class="t" style="left:161px;top:878px;letter-spacing:-0.3px">Problems</div>
<svg style="left:230px;top:880px" width="11" height="8"><path d="M0 1H11M0 4H7M0 7H9" stroke="#AFB1B3" stroke-width="1.6"/></svg>
<div class="t" style="left:246px;top:878px;letter-spacing:-0.45px">Messages</div>
<svg style="left:318px;top:880px" width="10" height="9"><path d="M0 1H2M0 4.3H2M0 7.6H2M3.5 1H10M3.5 4.3H10M3.5 7.6H10" stroke="#AFB1B3" stroke-width="1.6"/></svg>
<div class="t" style="left:333px;top:878px;letter-spacing:-0.6px">TODO</div>
<svg style="left:386px;top:879px" width="11" height="10"><rect x="0" y="0" width="11" height="10" fill="#AFB1B3"/><path d="M2 2.5L4.5 4.7L2 7M5 8H9" stroke="#3C3F41" stroke-width="1.1" fill="none"/></svg>
<div class="t" style="left:402px;top:878px">Terminal</div>
<svg style="left:466px;top:878px" width="13" height="12"><path d="M6.5 0.5L12.8 11.5H0.2Z" fill="#AFB1B3"/><path d="M6 7L7.5 9.5H4.5Z" fill="#3C3F41"/></svg>
<div class="t" style="left:483px;top:878px;letter-spacing:-0.35px">CMake</div>
<svg style="left:1250px;top:878px" width="14" height="13"><path d="M13 12.2H6.5A5.8 5.8 0 1 1 12.3 6.4Z" stroke="#AFB1B3" stroke-width="1.3" fill="none"/></svg>
<div class="t" style="left:1267px;top:878px;color:#FFFFFF;letter-spacing:-0.28px">Event Log</div>

<!-- ===== STATUS BAR ===== -->
<svg style="left:12px;top:899px" width="13" height="13"><path d="M0.5 2V11.5H10" stroke="#BDBDBD" stroke-width="1.1" fill="none"/><rect x="2.5" y="0.5" width="9" height="9" stroke="#BDBDBD" stroke-width="1.1" fill="none"/></svg>
<div class="t" style="left:33px;top:898px;letter-spacing:-0.17px">Tests failed: 2, passed: 1 (moments ago)</div>
<svg style="left:943px;top:897px" width="16" height="16"><circle cx="8" cy="8" r="8" fill="#9EA2A5"/><path d="M3.5 5.5L6.5 7M12.5 5.5L9.5 7" stroke="#3C3F41" stroke-width="1.3"/><path d="M5 12Q8 9.5 11 12" stroke="#3C3F41" stroke-width="1.3" fill="none"/></svg>
<div class="t" style="left:969px;top:898px;letter-spacing:-0.45px">17:2</div>
<div class="t" style="left:1002px;top:898px">LF</div>
<div class="t" style="left:1026px;top:898px;letter-spacing:-0.34px">UTF-8</div>
<div class="t" style="left:1069px;top:898px;letter-spacing:-0.55px">4 spaces</div>
<div class="t" style="left:1125px;top:898px;color:#787878">C++: hello | Debug</div>
<svg style="left:1238px;top:897px" width="11" height="15"><path d="M2 2V12.5M2 11Q2 7 8.5 5.5V2" stroke="#AFB1B3" stroke-width="1.5" fill="none"/><circle cx="2" cy="2" r="1.6" fill="#AFB1B3"/><circle cx="2" cy="13" r="1.6" fill="#AFB1B3"/><circle cx="8.5" cy="2" r="1.6" fill="#AFB1B3"/></svg>
<div class="t" style="left:1254px;top:898px">master</div>
<svg style="left:1299px;top:899px" width="13" height="11"><path d="M1.5 6V3.3A2.5 2.5 0 0 1 6.5 3.3V4.5" stroke="#AFB1B3" stroke-width="1.3" fill="none"/><rect x="4" y="5" width="8" height="6" fill="#AFB1B3"/></svg>
<svg style="left:1322px;top:898px" width="17" height="15"><path d="M2 11A3.5 3.5 0 0 1 3 4.5A4.8 4.8 0 0 1 12 4A3.4 3.4 0 0 1 13 9.5" fill="#AFB1B3"/><path d="M5.5 4.3A2 2 0 1 1 8 6.2Q7.3 6.6 7.3 7.8" stroke="#3C3F41" stroke-width="1.2" fill="none"/><circle cx="12" cy="11" r="3.2" fill="#AFB1B3"/><circle cx="12" cy="11" r="1.2" fill="#3C3F41"/></svg>

</body></html>
